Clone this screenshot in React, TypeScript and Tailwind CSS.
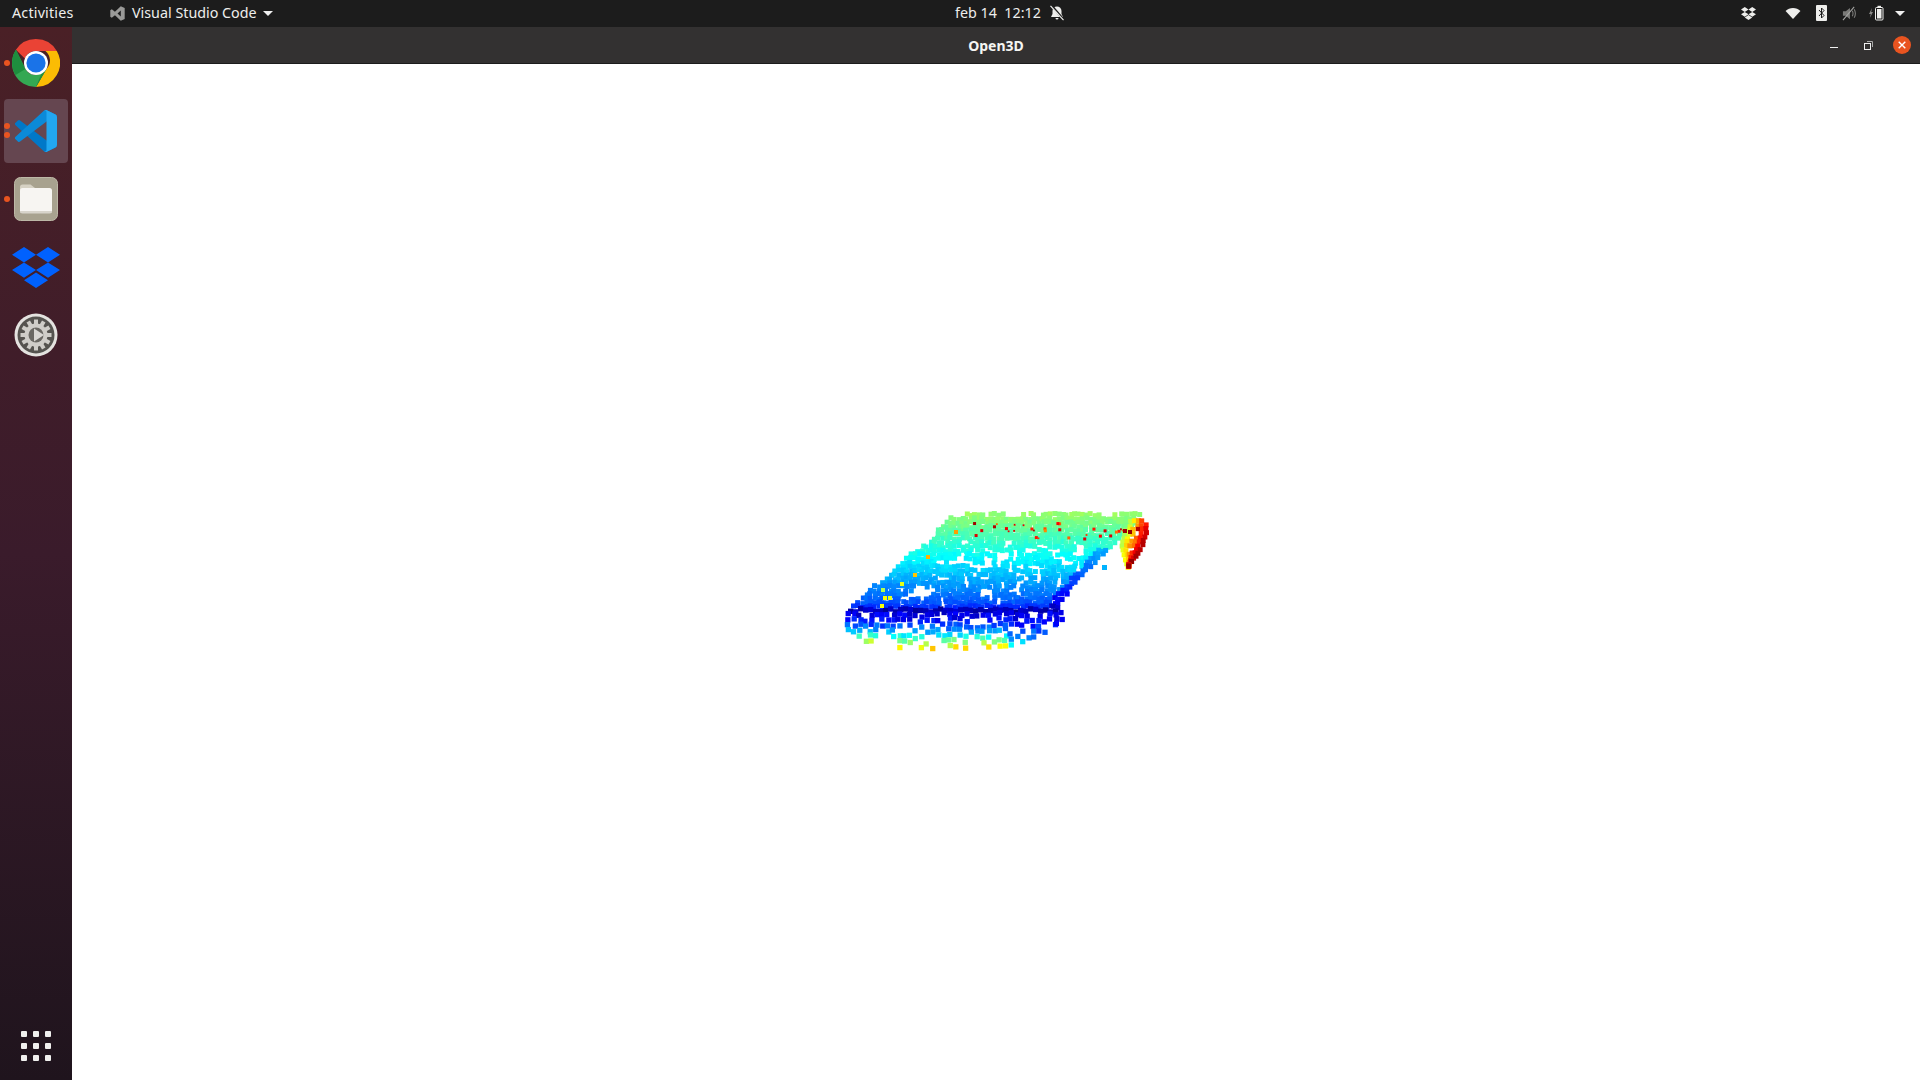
import React from "react";

function rng(seed: number) {
  let s = seed;
  return () => {
    s = (s * 1664525 + 1013904223) % 4294967296;
    return s / 4294967296;
  };
}

function jet(t: number) {
  const c = (x: number) => Math.round(255 * Math.max(0, Math.min(1, x)));
  const r = c(1.5 - Math.abs(4 * t - 3));
  const g = c(1.5 - Math.abs(4 * t - 2));
  const b = c(1.5 - Math.abs(4 * t - 1));
  return `rgb(${r},${g},${b})`;
}

type P = { x: number; y: number; c: string; s: number };

function interp(tbl: number[][], y: number) {
  for (let i = 0; i < tbl.length - 1; i++) {
    if (y <= tbl[i + 1][0]) {
      const f = (y - tbl[i][0]) / (tbl[i + 1][0] - tbl[i][0]);
      return tbl[i][1] + f * (tbl[i + 1][1] - tbl[i][1]);
    }
  }
  return tbl[tbl.length - 1][1];
}

const leftEdge = [[512, 955], [517, 948], [540, 930], [553, 910], [580, 880], [596, 862], [610, 848]];
const rightEdge = [[512, 1136], [530, 1128], [540, 1112], [573, 1081], [590, 1066], [610, 1052]];
const tempDeck = [[512, 0.52], [530, 0.46], [552, 0.385], [565, 0.34], [585, 0.265], [600, 0.21], [606, 0.15], [612, 0.08]];

function cloud(): P[] {
  const r = rng(12345);
  const pts: P[] = [];
  const holes = new Set<string>();
  for (let i = 0; i < 80; i++) {
    const hy = 540 + Math.floor(r() * 58);
    const gy = Math.floor(hy / 4);
    const lx = interp(leftEdge, hy) + 30;
    const rx = interp(rightEdge, hy) - 8;
    const gx = Math.floor((lx + r() * (rx - lx)) / 4);
    const horiz = r() > 0.45;
    const len = 1 + Math.floor(r() * 3);
    for (let k = 0; k < len; k++) holes.add(horiz ? `${gx + k},${gy}` : `${gx},${gy + k}`);
  }
  for (let gy = 128; gy <= 151; gy++) {
    const y = gy * 4;
    const lx = interp(leftEdge, y);
    const rx = interp(rightEdge, y);
    for (let gx = Math.floor(lx / 4); gx <= rx / 4; gx++) {
      if (holes.has(`${gx},${gy}`)) continue;
      const x = gx * 4 + r() * 2.2 - 1;
      const py = y + r() * 2.2 - 1;
      if (y < 516 && r() < 0.3) continue;
      const nearRight = y > 545 && x > rx - 10 ? 0.1 : 0;
      const t = interp(tempDeck, y) + (r() - 0.5) * 0.03 - nearRight;
      pts.push({ x, y: py, c: jet(t), s: 5 });
    }
  }
  // dark front rim
  for (let x = 848; x < 1054; x += 5) {
    const y = 606 + r() * 3.5;
    pts.push({ x, y, c: jet(0.02 + r() * 0.07), s: 5.4 });
  }
  // warm specks in the far band
  for (let i = 0; i < 30; i++) {
    const x = 965 + r() * 165;
    const y = 522 + r() * 16;
    pts.push({ x, y, c: jet(0.7 + r() * 0.28), s: r() > 0.6 ? 1.8 : 3 });
  }
  [[883, 596, 0.62], [888, 596, 0.6], [881, 588, 0.55], [900, 582, 0.6], [913, 573, 0.68], [926, 555, 0.7], [954, 530, 0.72], [880, 604, 0.62]].forEach(([x, y, t]) =>
    pts.push({ x, y, c: jet(t), s: 4 })
  );
  // front skirt under the rim
  const limit = (x: number) =>
    x < 870 ? 628 + (x - 846) * 0.7 : x < 1005 ? 646 : 646 - (x - 1005) * 0.42;
  for (let qy = 612; qy <= 646; qy += 5.4) {
    for (let qx = 846; qx <= 1060; qx += 5.6) {
      const x = qx + r() * 2.6 - 1.3;
      const y = qy + r() * 2.6 - 1.3 + (x > 900 ? Math.sin(x / 9) * 1.4 : 0);
      if (y > limit(x)) continue;
      const f = Math.max(0, (y - 612) / 33);
      const keep = x < 862 ? 1 : 0.9 - f * 0.35;
      if (r() > keep) continue;
      if (x > 872 && x < 890 && f > 0.65) continue;
      const scale = x > 1005 ? 0.3 : x < 880 ? 0.62 : 0.54;
      const t = 0.1 + Math.pow(f, 1.5) * scale + (r() - 0.5) * 0.08;
      pts.push({ x, y, c: jet(Math.max(0.06, t)), s: 5.3 });
    }
  }
  // right-hand flap
  const flap = rng(77);
  const outer = [[0, 1143], [0.25, 1144], [0.55, 1140], [0.78, 1134], [1, 1126]];
  const inner = [[0, 1124], [0.25, 1122], [0.55, 1119], [0.78, 1123], [1, 1126]];
  for (let v = 0; v <= 1; v += 0.09) {
    for (let w = 0; w <= 1.001; w += 0.2) {
      const a = interp(inner, v);
      const b = interp(outer, v);
      const x = a + (b - a) * w + (flap() - 0.5) * 1.6;
      const y = 520 + v * 45 + (flap() - 0.5) * 2 - w * 2;
      if (flap() < 0.08) continue;
      const t = 0.5 + w * 0.36 + v * 0.14 + (flap() - 0.5) * 0.05;
      pts.push({ x, y, c: jet(Math.min(0.98, t)), s: 5 });
    }
  }
  [[1123, 529, 0.97], [1128, 530, 0.98], [1136, 527, 0.95]].forEach(([x, y, t]) => pts.push({ x, y, c: jet(t), s: 4 }));
  pts.push({ x: 1102, y: 565, c: jet(0.3), s: 5 }, { x: 1002, y: 638, c: jet(0.45), s: 5 }, { x: 1054, y: 621, c: jet(0.12), s: 5 });
  return pts;
}

const POINTS = cloud();

function Dot({ y }: { y: number }) {
  return <span className="absolute left-0 size-[6px] rounded-full bg-[#e95420]" style={{ top: y }} />;
}

function Chrome() {
  return (
    <svg viewBox="0 0 48 48" className="size-12">
      <path d="M24 0a24 24 0 0 1 20.8 12H24a12 12 0 0 0-11.2 7.6L3.9 10.7A24 24 0 0 1 24 0z" fill="#ea4335" />
      <path d="M44.8 12A24 24 0 0 1 24 48l10.4-18a12 12 0 0 0-1-18z" fill="#fbbc04" />
      <path d="M3.9 10.7l9.6 19.3A12 12 0 0 0 24 36l10.4-6L24 48A24 24 0 0 1 3.9 10.7z" fill="#34a853" />
      <path d="M24 48l5-12.5L34.4 30 24 48zM3.9 10.7L13.5 30 3.5 36A24 24 0 0 1 3.9 10.7z" fill="#1e8e3e" />
      <circle cx="24" cy="24" r="12" fill="#fff" />
      <circle cx="24" cy="24" r="9.6" fill="#1a73e8" />
    </svg>
  );
}

function VsCode() {
  return (
    <svg viewBox="0 0 100 100" className="size-[42px]">
      <path
        d="M96.46 89.2 75.86 99.13a6.23 6.23 0 0 1-7.1-1.2L1.3 36.4a4.17 4.17 0 0 1 0-6.16l5.51-5a4.17 4.17 0 0 1 5.32-.24L93.34 86.6a4.14 4.14 0 0 0 6.66-3.3v.24a6.25 6.25 0 0 1-3.54 5.66z"
        fill="#0078c8"
      />
      <path
        d="M96.46 10.8 75.86.87a6.23 6.23 0 0 0-7.1 1.2L1.3 63.6a4.17 4.17 0 0 0 0 6.16l5.51 5a4.17 4.17 0 0 0 5.32.24L93.34 13.4a4.14 4.14 0 0 1 6.66 3.3v-.24a6.25 6.25 0 0 0-3.54-5.66z"
        fill="#0b8ad8"
      />
      <path
        d="M75.86 99.13a6.23 6.23 0 0 1-7.1-1.21c2.3 2.3 6.24.67 6.24-2.58V4.66c0-3.25-3.94-4.88-6.24-2.58a6.23 6.23 0 0 1 7.1-1.21l20.6 9.9A6.25 6.25 0 0 1 100 16.4v67.2a6.25 6.25 0 0 1-3.54 5.63z"
        fill="#22a7f0"
      />
    </svg>
  );
}

function Files() {
  return (
    <svg viewBox="0 0 44 44" className="size-[44px]">
      <rect x="0.5" y="0.5" width="43" height="43" rx="6" fill="#a8a28f" stroke="#bdb8a7" />
      <path d="M6 12V10a2.5 2.5 0 0 1 2.5-2.5h8L21 11v2H6z" fill="#d6d1c3" />
      <rect x="6" y="11" width="32" height="25" rx="2.5" fill="#f7f5f2" />
      <path d="M6 34a2.5 2.5 0 0 0 2.5 2.5h27a2.5 2.5 0 0 0 2.5-2.5z" fill="#d8d4cb" />
    </svg>
  );
}

function Dropbox({ className, fill }: { className: string; fill: string }) {
  return (
    <svg viewBox="0 0 48 41" className={className}>
      <path
        d="M12 0l12 7.7L12 15.4 0 7.7zM36 0l12 7.7-12 7.7L24 7.7zM0 23l12-7.6L24 23l-12 7.7zM36 15.4L48 23l-12 7.7L24 23zM12 33.3l12-7.7 12 7.7L24 41z"
        fill={fill}
      />
    </svg>
  );
}

function Settings() {
  const teeth = Array.from({ length: 12 }, (_, i) => i * 30);
  return (
    <svg viewBox="0 0 44 44" className="size-[44px]">
      <circle cx="22" cy="22" r="21.5" fill="#e4e2df" />
      <circle cx="22" cy="22" r="18.5" fill="#55534f" />
      {teeth.map((a) => (
        <rect key={a} x="20" y="6.5" width="4" height="6" fill="#cfcdc8" transform={`rotate(${a} 22 22)`} />
      ))}
      <circle cx="22" cy="22" r="11.5" fill="#cfcdc8" />
      <circle cx="22" cy="22" r="7.5" fill="#6a6863" />
      <path d="M20 15.5L30 22l-10 6.5z" fill="#d9d7d3" />
    </svg>
  );
}

function DockCell({ children, active, dots }: { children: React.ReactNode; active?: boolean; dots?: number[] }) {
  return (
    <div className={`relative flex h-16 w-16 items-center justify-center rounded-[4px] ${active ? "bg-[#654650]" : ""}`}>
      <div className="absolute inset-y-0 left-0">
        {dots?.map((d) => <Dot key={d} y={d} />)}
      </div>
      {children}
    </div>
  );
}

function Caret() {
  return <span className="inline-block h-0 w-0 border-x-[5px] border-t-[5px] border-x-transparent border-t-[#f0f0f0]" />;
}

export default function App() {
  const dots = Array.from({ length: 9 });
  return (
    <div className="flex h-screen w-screen flex-col overflow-hidden bg-white font-['Noto_Sans','Open_Sans',sans-serif]">
      <header className="flex h-[27px] shrink-0 items-center bg-[#1c1c1c] pb-[1px] text-[14.3px] leading-none text-[#eeeeec]">
        <span className="ml-[12px] w-[62px] tracking-[0.2px]">Activities</span>
        <svg viewBox="0 0 100 100" className="ml-[36px] size-[15px]">
          <path d="M72 2l26 11v74L72 98 33 61 12 78 2 72V28l10-6 21 17zM72 30L50 50l22 20z" fill="#9a9a98" />
        </svg>
        <span className="ml-[7px] w-[126px] whitespace-nowrap">Visual Studio Code</span>
        <span className="ml-[5px] flex"><Caret /></span>
        <span className="ml-[682px] w-[84px] whitespace-pre">feb 14  12:12</span>
        <svg viewBox="0 0 16 16" className="ml-[10px] size-[16px]">
          <path d="M8 1.5a4.5 4.5 0 0 0-4.5 4.5v3L2 12h12l-1.5-3V6A4.5 4.5 0 0 0 8 1.5zM6.5 13a1.5 1.5 0 0 0 3 0z" fill="#eeeeec" />
          <path d="M2.5 0.5l13 15" stroke="#1c1c1c" strokeWidth="2.2" />
          <path d="M1.5 0.8l13 14.4" stroke="#eeeeec" strokeWidth="1.2" />
        </svg>
        <div className="ml-auto flex items-center">
          <Dropbox className="h-[13px] w-[15px]" fill="#eeeeec" />
          <svg viewBox="0 0 16 14" className="ml-[29px] h-[13px] w-[16px]">
            <path d="M8 13L0 4.2C2 2 5 1 8 1s6 1 8 3.2z" fill="#eeeeec" />
          </svg>
          <svg viewBox="0 0 11 16" className="ml-[15px] h-[16px] w-[11px]">
            <rect width="11" height="16" rx="1" fill="#eeeeec" />
            <path d="M3 5l5 5.5L5.5 13V3L8 5.5 3 11" fill="none" stroke="#1c1c1c" strokeWidth="1" />
          </svg>
          <svg viewBox="0 0 16 16" className="ml-[15px] size-[15px]">
            <path d="M1 5.5h3L8.5 2v12L4 10.5H1z" fill="#7a7a78" />
            <path d="M11 5c1 2 1 4 0 6M13 3.5c1.7 3 1.7 6 0 9" fill="none" stroke="#7a7a78" strokeWidth="1.2" />
            <path d="M1 15L13 1" stroke="#a5a5a3" strokeWidth="1.1" />
          </svg>
          <svg viewBox="0 0 16 16" className="ml-[11px] size-[16px]">
            <path d="M4 3L1 9h1.8L1.8 13 5 7H3.2z" fill="#8a8a88" />
            <rect x="7.5" y="2.5" width="7.5" height="12.5" rx="1" fill="none" stroke="#eeeeec" strokeWidth="1" />
            <rect x="9" y="4" width="4.5" height="9.5" fill="#eeeeec" />
            <rect x="9.5" y="0.8" width="3.5" height="1.7" fill="#eeeeec" />
          </svg>
          <span className="ml-[11px] mr-[15px] flex"><Caret /></span>
        </div>
      </header>
      <div className="flex min-h-0 flex-1">
        <aside className="flex w-[72px] shrink-0 flex-col items-center gap-1 bg-gradient-to-b from-[#4a2026] via-[#3a1b2b] to-[#1f141d] pb-[2px] pt-1">
          <DockCell dots={[29]}><Chrome /></DockCell>
          <DockCell active dots={[24, 33]}><VsCode /></DockCell>
          <DockCell dots={[29]}><Files /></DockCell>
          <DockCell><Dropbox className="h-[41px] w-[48px]" fill="#0061fe" /></DockCell>
          <DockCell><Settings /></DockCell>
          <div className="mt-auto flex h-16 w-16 items-center justify-center">
            <div className="grid grid-cols-3 gap-[6px]">
              {dots.map((_, i) => (
                <span key={i} className="size-[6px] rounded-[1px] bg-[#f0f0ee]" />
              ))}
            </div>
          </div>
        </aside>
        <div className="flex min-w-0 flex-1 flex-col">
          <div className="flex h-[37px] shrink-0 items-center border-b border-[#1c1c1c] bg-[#333131] text-[14px] font-bold text-[#f5f5f3]">
            <div className="flex-1" />
            <span className="mt-[1px] leading-none">Open3D</span>
            <div className="flex flex-1 items-center justify-end">
              <span className="mr-[26px] mt-[4px] h-[1px] w-[8px] bg-[#f0f0f0]" />
              <svg viewBox="0 0 9 9" className="mr-[20px] size-[9px]">
                <rect x="0.5" y="2.5" width="6" height="6" fill="none" stroke="#f0f0f0" />
                <path d="M3 .5h5.5V6" fill="none" stroke="#aaa" />
              </svg>
              <span className="mr-[9px] flex size-[18px] items-center justify-center rounded-full bg-[#e95420]">
                <svg viewBox="0 0 8 8" className="size-[8px]">
                  <path d="M.7.7l6.6 6.6M7.3.7L.7 7.3" stroke="#fff" strokeWidth="1.4" />
                </svg>
              </span>
            </div>
          </div>
          <main className="flex min-h-0 flex-1 items-center justify-center bg-white">
            <svg viewBox="836 492 320 160" width="320" height="160">
              {POINTS.map((p, i) => (
                <rect key={i} x={p.x} y={p.y} width={p.s} height={p.s} fill={p.c} />
              ))}
            </svg>
          </main>
        </div>
      </div>
    </div>
  );
}
